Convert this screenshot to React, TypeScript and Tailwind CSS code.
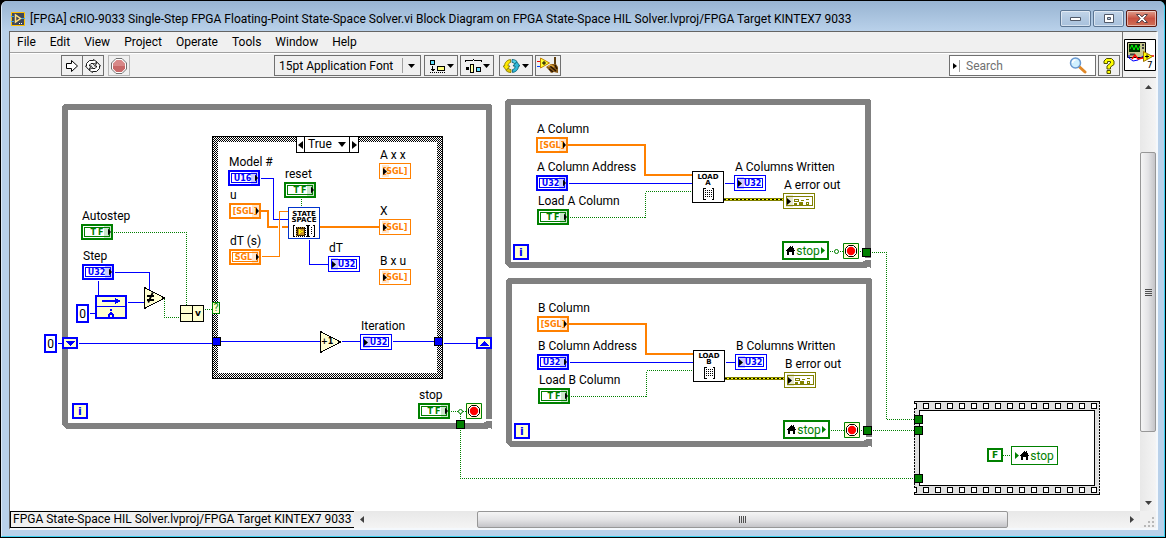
import type { ReactNode } from "react";

type Kind = "U16" | "U32" | "TF" | "SGL" | "[SGL]" | "error";

interface Terminal {
  x: number;
  y: number;
  kind: Kind;
  label: string;
  indicator?: boolean;
}

interface Wire {
  d: string;
  type: "int" | "bool" | "float" | "array";
}

// Diagram coordinates are window coordinates, the canvas starts at this corner.
const ORIGIN = { x: 10, y: 78 };

const MENUS = ["File", "Edit", "View", "Project", "Operate", "Tools", "Window", "Help"];

const TERMINALS: Terminal[] = [
  { x: 81, y: 224, kind: "TF", label: "Autostep" },
  { x: 82, y: 264, kind: "U32", label: "Step" },
  { x: 228, y: 170, kind: "U16", label: "Model #" },
  { x: 229, y: 203, kind: "[SGL]", label: "u" },
  { x: 229, y: 249, kind: "SGL", label: "dT (s)" },
  { x: 284, y: 182, kind: "TF", label: "reset" },
  { x: 379, y: 163, kind: "[SGL]", label: "A x x", indicator: true },
  { x: 379, y: 219, kind: "[SGL]", label: "X", indicator: true },
  { x: 379, y: 269, kind: "[SGL]", label: "B x u", indicator: true },
  { x: 328, y: 256, kind: "U32", label: "dT", indicator: true },
  { x: 360, y: 334, kind: "U32", label: "Iteration", indicator: true },
  { x: 418, y: 403, kind: "TF", label: "stop" },
  { x: 536, y: 137, kind: "[SGL]", label: "A Column" },
  { x: 536, y: 175, kind: "U32", label: "A Column Address" },
  { x: 537, y: 209, kind: "TF", label: "Load A Column" },
  { x: 734, y: 175, kind: "U32", label: "A Columns Written", indicator: true },
  { x: 783, y: 193, kind: "error", label: "A error out", indicator: true },
  { x: 537, y: 316, kind: "[SGL]", label: "B Column" },
  { x: 537, y: 354, kind: "U32", label: "B Column Address" },
  { x: 538, y: 388, kind: "TF", label: "Load B Column" },
  { x: 735, y: 354, kind: "U32", label: "B Columns Written", indicator: true },
  { x: 784, y: 372, kind: "error", label: "B error out", indicator: true },
];

const WIRES: Wire[] = [
  { type: "int", d: "M57 343H62M78 343H212M220 341H320M341 341H360M392 341H434M443 343H476" },
  { type: "int", d: "M114 272H149V290M98 280V295M89 313H95M127 302H144" },
  { type: "int", d: "M260 178H273V219H288M309 239V264H328" },
  { type: "int", d: "M568 183H692M724 183H734M569 362H693M725 362H735" },
  { type: "float", d: "M261 256H279V211H288" },
  { type: "array", d: "M261 211H268V227H278M282 227H288M320 227H379" },
  { type: "array", d: "M568 145H645V175H692M569 324H646V354H693" },
  { type: "bool", d: "M113 232H186V305M164 298V317H180M204 309H212M301 198V207" },
  { type: "bool", d: "M450 411H466M460 411V420M460 429V478H914" },
  { type: "bool", d: "M569 217H645V191H692M570 396H646V370H693" },
  { type: "bool", d: "M829 251H843M859 251H862M871 252H886V419H914" },
  { type: "bool", d: "M830 430H844M860 430H863M872 430H914" },
];

const WIRE_COLORS = { int: "#0000ff", bool: "#008000", float: "#ff8000", array: "#ff8000" };

const COLORS: Record<Kind, string> = {
  U16: "border-[#0000ff] text-[#0000ff]",
  U32: "border-[#0000ff] text-[#0000ff]",
  TF: "border-[#008000] text-[#008000]",
  SGL: "border-[#ff8000] text-[#ff8000]",
  "[SGL]": "border-[#ff8000] text-[#ff8000]",
  error: "border-[#808000] text-[#808000]",
};

const HOLES = Array.from({ length: 15 }, (_, i) => 923 + i * 12);

function Place({ x, y, children }: { x: number; y: number; children: ReactNode }) {
  return (
    <div className="absolute" style={{ left: x - ORIGIN.x, top: y - ORIGIN.y }}>
      {children}
    </div>
  );
}

function TerminalText({ kind }: { kind: Kind }) {
  if (kind === "error") {
    return (
      <svg width="20" height="8" viewBox="0 0 20 8" shapeRendering="crispEdges">
        <path d="M2.500 1.500h4v2h-4zM14.500 4.500h2v2h-2z" fill="none" stroke="#808000" />
        <path d="M9 2h3v1H9zM14 1h3v1h-3zM2 5h3v2H2zM7 4h4v3H7z" fill="#808000" />
      </svg>
    );
  }
  if (kind === "TF") {
    return (
      <span className="flex gap-[2px]">
        <span>T</span>
        <span>F</span>
      </span>
    );
  }
  return <span>{kind}</span>;
}

function TerminalNode({ x, y, kind, label, indicator }: Terminal) {
  const boxed = kind !== "[SGL]";
  const shift = indicator ? "pl-[5px]" : kind === "TF" ? "pr-0" : "pr-[3px]";
  return (
    <>
      <Place x={x + 1} y={y - 16}>
        <span className="block whitespace-nowrap text-[12px] leading-4">{label}</span>
      </Place>
      <Place x={x} y={y}>
        <div
          className={`relative flex h-4 w-8 bg-white ${COLORS[kind]} ${indicator ? "border p-[2px]" : "border-2 p-px"}`}
        >
          <div
            className={`flex flex-1 items-center justify-center pt-px font-['DejaVu_Sans',sans-serif] text-[8px] leading-none font-bold ${COLORS[kind]} ${boxed ? `border ${shift}` : ""}`}
          >
            <TerminalText kind={kind} />
          </div>
          <svg
            className={`absolute top-0 ${indicator ? "left-[2px] mt-px" : "right-0"}`}
            width="7"
            height="12"
            viewBox="0 0 7 12"
          >
            <path d="M0 0h7v12H0z" fill="currentColor" opacity="0.2" />
            <path d={indicator ? "M1 3v7l4-3.500z" : "M4 2.500v7L7 6z"} fill="#000" />
          </svg>
        </div>
      </Place>
    </>
  );
}

function LoopFrame({ x, y, right, bottom }: { x: number; y: number; right: number; bottom: number }) {
  return (
    <g fill="#808080">
      <path
        d={`M${x + 2} ${y}H${right - 2}l2 2V${bottom - 10}H${right - 6}V${y + 6}H${x + 6}V${bottom - 6}H${right - 8}v-1h2v-1H${right}v8h-1v-1h-3v1H${x + 4}l-4-4V${y + 3}z`}
      />
    </g>
  );
}

function Iteration({ x, y }: { x: number; y: number }) {
  return (
    <Place x={x} y={y}>
      <div className="flex h-4 w-4 items-center justify-center border-2 border-[#0000ff] bg-[#ffffd0] font-['DejaVu_Sans',sans-serif] text-[11px] leading-none font-bold text-[#0000ff]">
        i
      </div>
    </Place>
  );
}

function StopSign({ x, y }: { x: number; y: number }) {
  return (
    <Place x={x} y={y}>
      <svg className="block" width="16" height="16" viewBox="0 0 16 16">
        <path d="M.5.5h15v15H.5z" fill="#ffffd0" stroke="#008000" />
        <path d="M5.500 2.500h5l3 3v5l-3 3h-5l-3-3v-5z" fill="#fff" stroke="#000" />
        <circle cx="8" cy="8" r="4.200" fill="#f00" />
      </svg>
    </Place>
  );
}

function House() {
  return (
    <svg width="9" height="9" viewBox="0 0 9 9" shapeRendering="crispEdges">
      <path d="M4 0h1v1h1V0h1v2h1v2h1v1H8v4H6V6H3v3H1V5H0V4h1V3h1V2h1V1h1z" fill="#000" />
    </svg>
  );
}

function LocalVariable({ x, y, write }: { x: number; y: number; write?: boolean }) {
  const arrow = (
    <svg width="4" height="7" viewBox="0 0 4 7">
      <path d="M0 0v7l4-3.500z" fill="#008000" />
    </svg>
  );
  return (
    <Place x={x} y={y}>
      <div
        className={`flex h-[19px] w-[47px] items-center justify-center gap-px border-[#008000] bg-white text-[12px] leading-4 text-[#008000] ${write ? "border" : "border-2"}`}
      >
        {write && arrow}
        <House />
        <span>stop</span>
        {!write && arrow}
      </div>
    </Place>
  );
}

function Zero({ x, y }: { x: number; y: number }) {
  return (
    <Place x={x} y={y}>
      <div className="flex h-[19px] w-[13px] items-center justify-center border-2 border-[#0000ff] bg-white text-[12px] leading-4">
        0
      </div>
    </Place>
  );
}

function LoadNode({ x, y, name }: { x: number; y: number; name: string }) {
  return (
    <Place x={x} y={y}>
      <div className="flex h-8 w-8 flex-col items-center border border-black bg-white pt-[2px] font-['DejaVu_Sans',sans-serif] text-[7px] leading-[6px] font-bold">
        <span>LOAD</span>
        <span>{name}</span>
        <svg className="mt-[2px]" width="11" height="12" viewBox="0 0 11 12" shapeRendering="crispEdges">
          <path d="M2.500 .5h-2v11h2M8.500 .5h2v11h-2" fill="none" stroke="#000" />
          <path d="M2 2.500h7M2 4.500h7M2 6.500h7M2 8.500h7" stroke="#000" strokeDasharray="1 1" />
        </svg>
      </div>
    </Place>
  );
}

function StateSpaceNode() {
  return (
    <Place x={288} y={207}>
      <div className="flex h-8 w-8 flex-col items-center border border-[#0033cc] bg-white pt-[3px] font-['DejaVu_Sans',sans-serif] text-[7px] leading-[6px] font-bold">
        <span>STATE</span>
        <span>SPACE</span>
        <svg className="mt-[2px]" width="22" height="12" viewBox="0 0 22 12" shapeRendering="crispEdges">
          <path d="M2 .5H.5v11H2M13 .5h1.500v11H13M17 .5h-1.500v11H17M20 .5h1.500v11H20" fill="none" stroke="#000" />
          <path d="M3 2h9v9H3z" fill="#c89020" stroke="#000" strokeDasharray="1 1" />
          <path d="M4 3h7v7H4z" fill="#c89020" stroke="#402800" />
          <path d="M6 4.500v4l3-2z" fill="none" stroke="#ffff00" />
          <path d="M18.500 2v8" stroke="#000" strokeDasharray="1 1" />
        </svg>
      </div>
    </Place>
  );
}

function Structures() {
  return (
    <svg
      className="absolute top-0 left-0 overflow-visible"
      width="1130"
      height="433"
      viewBox="10 78 1130 433"
      shapeRendering="crispEdges"
      aria-hidden="true"
    >
      <defs>
        <pattern id="hatch" width="2" height="2" patternUnits="userSpaceOnUse">
          <path d="M0 0h2v2H0z" fill="#fff" />
          <path d="M0 0h1v1H0zM1 1h1v1H1z" />
        </pattern>
      </defs>
      <LoopFrame x={62} y={104} right={492} bottom={429} />
      <LoopFrame x={505} y={99} right={871} bottom={268} />
      <LoopFrame x={506} y={278} right={872} bottom={447} />

      {/* case structure */}
      <path d="M212 136h231v243H212zM218 142v231h219V142z" fill="url(#hatch)" fillRule="evenodd" />
      <path d="M212.500 136.500h230v242h-230z" fill="none" stroke="#000" />

      {/* flat sequence */}
      <path d="M914 401h186v94H914z" fill="#e0e0e0" />
      <path d="M914 401.500h186M914 494.500h186" stroke="#000" />
      <path d="M914.500 402v92M1099.500 402v92" stroke="#000" strokeDasharray="2 1" />
      <path d="M919.500 410.500h175v75h-175z" fill="#fff" stroke="#000" />
      <g fill="#fff" stroke="#000">
        <path d="M914 403.500h2.500v5H914M914 487.500h2.500v5H914" />
        {HOLES.map((x) => (
          <path key={x} d={`M${x + 0.5} 403.500h5v5h-5zM${x + 0.5} 487.500h5v5h-5z`} />
        ))}
      </g>

      {WIRES.map(({ d, type }) => (
        <path
          key={d}
          d={d}
          fill="none"
          stroke={WIRE_COLORS[type]}
          strokeWidth={type === "array" ? 2 : 1}
          strokeDasharray={type === "bool" ? "1 1" : undefined}
          transform={type === "array" ? undefined : "translate(.5 .5)"}
        />
      ))}
      {[
        [724, 783, 199],
        [725, 784, 378],
      ].map(([from, to, y]) => (
        <g key={y}>
          <path d={`M${from} ${y + 0.5}H${to}`} stroke="#808000" strokeWidth="3" />
          <path d={`M${from} ${y + 0.5}H${to}`} stroke="#ffff00" />
          <path d={`M${from} ${y + 0.5}H${to}`} stroke="#000" strokeDasharray="2 2" />
        </g>
      ))}
      <path d="M987 455.500h24" stroke="#008000" strokeDasharray="1 1" />
      <g fill="#fff" stroke="#008000" shapeRendering="auto">
        <circle cx="460.500" cy="411.500" r="2" />
        <circle cx="836.500" cy="251.500" r="2" />
      </g>

      {/* tunnels */}
      <g stroke="#000">
        <path
          fill="#008000"
          d="M456.500 420.500h8v8h-8zM862.500 248.500h8v8h-8zM863.500 426.500h8v8h-8zM914.500 415.500h8v8h-8zM914.500 426.500h8v8h-8zM914.500 474.500h8v8h-8z"
        />
        <path fill="#0000ff" d="M212.500 337.500h8v8h-8zM434.500 337.500h8v8h-8z" />
      </g>

      {/* shift registers */}
      <path d="M63 338h14v10H63zM477 338h14v10h-14z" fill="#ffffd0" stroke="#0000ff" strokeWidth="2" />
      <path d="M65 341h10l-5 5zM479 346h10l-5-5z" fill="#0000ff" />

      {/* feedback node */}
      <path d="M96 296h30v22H96z" fill="#ffffd0" stroke="#0000ff" strokeWidth="2" />
      <path d="M96 306.500h30" stroke="#0000ff" />
      <path d="M102 300h13v-2l6 3-6 3v-2h-13z" fill="#0000ff" />
      <path d="M110 309h2v2h-2zM110 312h2v1h1v1h1v3h-2v-2h-2v2h-2v-3h1v-1h1z" fill="#0000ff" />

      {/* not equal, increment, or */}
      <g fill="#ffffd0" stroke="#000">
        <path d="M144.500 287.500v21l20-10.500zM320.500 331.500v21l20-10.500z" />
        <path d="M180.500 305.500h23v16h-23zM192.500 305.500v16M180.500 313.500h12" />
      </g>
      <path d="M147 295h7v2h-7zM147 299h7v2h-7zM152 292l1.500 1-4.500 10-1.500-1z" shapeRendering="auto" />
    </svg>
  );
}

function Diagram() {
  return (
    <main className="relative min-w-0 flex-1 overflow-hidden bg-white">
      <Structures />
      {TERMINALS.map((t) => (
        <TerminalNode key={`${t.x}-${t.y}`} {...t} />
      ))}
      <Place x={296} y={136}>
        <div className="flex h-[17px] w-[63px] items-stretch border border-black bg-white text-[12px] leading-[15px]">
          <button type="button" aria-label="Previous case" className="flex w-2 items-center justify-center border-r border-black">
            <svg width="5" height="8" viewBox="0 0 5 8"><path d="M5 0v8L0 4z" /></svg>
          </button>
          <button type="button" className="flex flex-1 items-center justify-between px-[3px]">
            True
            <svg width="8" height="5" viewBox="0 0 8 5"><path d="M0 0h8L4 5z" /></svg>
          </button>
          <button type="button" aria-label="Next case" className="flex w-[9px] items-center justify-center border-l border-black">
            <svg width="5" height="8" viewBox="0 0 5 8"><path d="M0 0v8l5-4z" /></svg>
          </button>
        </div>
      </Place>
      <StateSpaceNode />
      <LoadNode x={692} y={171} name="A" />
      <LoadNode x={693} y={350} name="B" />
      <Iteration x={72} y={403} />
      <Iteration x={513} y={244} />
      <Iteration x={514} y={423} />
      <StopSign x={466} y={403} />
      <StopSign x={843} y={243} />
      <StopSign x={844} y={422} />
      <LocalVariable x={782} y={241} />
      <LocalVariable x={783} y={420} />
      <LocalVariable x={1011} y={446} write />
      <Zero x={44} y={334} />
      <Zero x={76} y={304} />
      <Place x={987} y={448}>
        <div className="flex h-[14px] w-4 items-center justify-center border-2 border-[#008000] bg-white font-['DejaVu_Sans',sans-serif] text-[9px] leading-none font-bold text-[#008000]">
          F
        </div>
      </Place>
      <Place x={212} y={302}>
        <div className="flex h-3 w-2 items-center justify-center border border-[#008000] bg-[#ffffd0] text-[10px] leading-none text-[#008000]">
          ?
        </div>
      </Place>
      <Place x={193} y={306}>
        <span className="block w-[10px] text-center font-['DejaVu_Sans',sans-serif] text-[9px] leading-[15px] font-bold">v</span>
      </Place>
      <Place x={321} y={335}>
        <span className="block font-['DejaVu_Sans',sans-serif] text-[8px] leading-[13px] font-bold">+1</span>
      </Place>
    </main>
  );
}

function ToolButton({ label, className, children }: { label: string; className: string; children: ReactNode }) {
  return (
    <button
      type="button"
      aria-label={label}
      className={`flex h-[21px] items-center justify-center border bg-[#f0f0f0] ${className}`}
    >
      {children}
    </button>
  );
}

function Caret() {
  return (
    <svg width="7" height="4" viewBox="0 0 7 4">
      <path d="M0 0h7L3.500 4z" />
    </svg>
  );
}

function Toolbar() {
  return (
    <div className="flex h-6 items-center border-t border-white pr-[2px] pl-[51px]">
      <ToolButton label="Run" className="w-[22px] border-[#707070]">
        <svg width="12" height="12" viewBox="0 0 12 12">
          <path d="M.5 3.500h5v-3L11.500 6l-6 5.500v-3h-5z" fill="#fff" stroke="#000" />
        </svg>
      </ToolButton>
      <ToolButton label="Run Continuously" className="-ml-px w-[22px] border-[#707070]">
        <svg width="16" height="14" viewBox="0 0 16 14">
          <g fill="#fff" stroke="#000" strokeWidth=".9">
            <path d="M1.500 7V4.500l3-3h4v-1L12 3 8.500 5.500v-1H6L4.500 6v1h2L3.500 10.500.5 7z" />
            <path d="M14.500 7v2.500l-3 3h-4v1L4 11l3.500-2.500v1H10L11.500 8V7h-2l3-3.500 3 3.500z" />
          </g>
        </svg>
      </ToolButton>
      <ToolButton label="Abort Execution" className="ml-1 w-[22px] border-[#b8b8b8]">
        <svg width="16" height="16" viewBox="0 0 16 16">
          <path d="M5 .5h6L15.500 5v6L11 15.500H5L.5 11V5z" fill="#fff" stroke="#707070" />
          <path d="M5.500 2h5L14 5.500v5L10.500 14h-5L2 10.500v-5z" fill="#d88888" />
          <path d="M2 8h12v2.500L10.500 14h-5L2 10.500z" fill="#c86868" />
        </svg>
      </ToolButton>
      <div className="relative ml-36 h-[21px] w-[147px] border border-[#707070] bg-[#f0f0f0]">
        <select aria-label="Text settings" className="block h-full w-full appearance-none pl-1 text-[12px] leading-[18px] outline-none">
          <option>15pt Application Font</option>
        </select>
        <span className="pointer-events-none absolute inset-y-[2px] right-0 flex w-[18px] items-center justify-center border-l border-[#a0a0a0]">
          <Caret />
        </span>
      </div>
      <ToolButton label="Align Objects" className="ml-[3px] w-[34px] gap-[2px] border-[#707070]">
        <svg width="16" height="14" viewBox="0 0 16 14" shapeRendering="crispEdges">
          <path d="M1.500 1.500h4v4h-4z" fill="#60e0ff" stroke="#000" />
          <path d="M8.500 7.500h7v4h-7z" fill="#ffff80" stroke="#000" />
          <path d="M3 7h1v3h2l-2 2H3l-2-2h2z" />
          <path d="M1 13.500h15" stroke="#000" strokeDasharray="1 1" />
        </svg>
        <Caret />
      </ToolButton>
      <ToolButton label="Distribute Objects" className="ml-[2px] w-[34px] gap-px border-[#707070]">
        <svg width="17" height="14" viewBox="0 0 17 14" shapeRendering="crispEdges">
          <path d="M.5 3V1.500H7L8.500 .5 10 1.500h6V3" fill="none" stroke="#000" />
          <path d="M1 8h3v3H1z" />
          <path d="M5.500 5.500h3v8h-3z" fill="#ffffa0" stroke="#000" />
          <path d="M11.500 8.500h4v4h-4z" fill="#60e0ff" stroke="#000" />
        </svg>
        <Caret />
      </ToolButton>
      <ToolButton label="Reorder" className="ml-[5px] w-[34px] gap-[2px] border-[#707070]">
        <svg width="17" height="14" viewBox="0 0 17 14">
          <path d="M7.500 .5v3C6 4 5 5 5 7h2L3.500 11.500 0 7h1.500C1.500 3.500 4 1 7.500.5z" fill="#ffe800" stroke="#787000" strokeWidth=".8" />
          <path d="M3 11.500c1.500 1.500 3 2 5 2v-3c-1.500 0-2-.5-2.500-1.500z" fill="#e0c800" stroke="#787000" strokeWidth=".8" />
          <path d="M9.500 13.500v-3c2-.5 2.500-1.500 2.500-3.500h-2l3.500-4.500L17 7h-1.500c0 3.500-2.500 6-6 6.500z" fill="#30b8d8" stroke="#005870" strokeWidth=".8" />
          <path d="M14 2.500C12.500 1 11 .5 9 .5v3c1.500 0 2 .5 2.500 1.500z" fill="#50d0e8" stroke="#005870" strokeWidth=".8" />
        </svg>
        <Caret />
      </ToolButton>
      <ToolButton label="Clean Up Diagram" className="ml-[2px] w-[26px] border-[#707070]">
        <svg width="22" height="17" viewBox="0 0 22 17">
          <path d="M0 4.500h5" stroke="#f00000" />
          <path d="M0 9.500h5" stroke="#0040ff" />
          <path d="M3.500 1v10l9-5z" fill="#ffff30" stroke="#c08000" />
          <path d="M5 6h4M7 4v4" stroke="#000" />
          <path d="M17 0h2v8h-2z" fill="#604010" />
          <path d="M9 10l5-3h5l2 3v6l-4-1-3 1-2-3z" fill="#8c5c18" />
          <path d="M13 9l6 5M12 12l4 3M18 8l2 4" stroke="#281400" strokeWidth="1.500" />
          <path d="M11 9.500l3-1.500 3 2" fill="none" stroke="#d8a038" strokeWidth="1.500" />
        </svg>
      </ToolButton>
      <form className="ml-auto flex h-[21px] w-[147px] items-center border border-[#707070] bg-white" role="search">
        <button type="button" aria-label="Search options" className="flex h-3 w-[10px] items-center justify-center border-r border-[#a0a0a0]">
          <svg width="4" height="6" viewBox="0 0 4 6"><path d="M0 0v6l4-3z" /></svg>
        </button>
        <input
          type="text"
          aria-label="Search"
          placeholder="Search"
          className="min-w-0 flex-1 pl-[6px] text-[12px] leading-4 outline-none placeholder:text-[#707070]"
        />
        <button type="button" aria-label="Start search" className="mr-2">
          <svg width="18" height="17" viewBox="0 0 18 17">
            <path d="M10 9.500l6 5.500" stroke="#e08828" strokeWidth="3" strokeLinecap="round" />
            <circle cx="6.500" cy="6" r="5" fill="#d0f0ff" stroke="#6898d0" strokeWidth="1.500" />
            <path d="M3.500 6a3 3 0 0 1 3-3" fill="none" stroke="#fff" strokeWidth="1.500" />
          </svg>
        </button>
      </form>
      <ToolButton label="Context Help" className="ml-[2px] w-[22px] border-[#707070]">
        <svg width="12" height="16" viewBox="0 0 12 16">
          <path
            d="M1 5.500V3l2.500-2.500h5L11 3v3.500L7.500 9v2H4V8l3.500-3V3.500h-3v2zM4 12.500h3.500v3H4z"
            fill="#ffff00"
            stroke="#505000"
          />
        </svg>
      </ToolButton>
    </div>
  );
}

function ViIcon() {
  return (
    <svg className="block" width="32" height="32" viewBox="0 0 32 32" aria-label="VI icon">
      <path d="M.5.5h31v31H.5z" fill="#fff" stroke="#000" />
      <path d="M3.500 3.500h18v15h-18z" fill="#c8c890" stroke="#000" />
      <path d="M5 5h11v8H5z" fill="#003000" />
      <path d="M6 10l2-4 2 5 2-5 2 5 2-4" fill="none" stroke="#00ff00" />
      <path d="M18 6h2M18 9h2M6 15.500h5" stroke="#404040" strokeWidth="2" />
      <path d="M5 16v3l4 3 5-1 5-4" fill="none" stroke="#0000ff" />
      <path d="M8 20l3-4 3 4 5-1M27 17h3" fill="none" stroke="#ff0000" strokeWidth="1.500" />
      <path d="M19.500 12.500v10l9-5z" fill="#ffff00" stroke="#a07000" />
      <path d="M21 17.500h4M23 15.500v4" stroke="#000" />
      <text x="23" y="29" className="font-['DejaVu_Sans',sans-serif] text-[9px]">7</text>
    </svg>
  );
}

function TitleBar() {
  const button = "flex h-[17px] w-[31px] items-center justify-center rounded-[2px] border shadow-[inset_0_0_0_1px_rgba(255,255,255,0.5)]";
  const blue = "border-[#5c7694] bg-linear-to-b from-[#c3d5e9] via-[#b4cae2] via-45% to-[#a8c1dc]";
  return (
    <header className="flex h-[30px] items-center bg-linear-to-b from-[#98b4d2] to-[#b9d1ea] pr-[7px] pl-[9px]">
      <svg className="mt-[5px]" width="14" height="14" viewBox="0 0 14 14" aria-hidden="true">
        <path d="M.5.5h13v13H.5z" fill="#404858" stroke="#ffc000" />
        <path d="M0 4.500h3M0 9.500h3M10 6.500h4" stroke="#40a0e0" />
        <path d="M4.500 3v7l5-3.500z" fill="#404858" stroke="#ffe080" strokeWidth="1.500" />
        <path d="M8 11.500h4" stroke="#fff" strokeDasharray="1 1" />
      </svg>
      <h1 className="ml-[5px] min-w-0 flex-1 truncate pt-[6px] text-[12px] leading-4">
        [FPGA] cRIO-9033 Single-Step FPGA Floating-Point State-Space Solver.vi Block Diagram on FPGA State-Space HIL
        Solver.lvproj/FPGA Target KINTEX7 9033
      </h1>
      <div className="flex gap-[2px] pt-[5px]">
        <button type="button" aria-label="Minimize" className={`${button} ${blue}`}>
          <svg width="11" height="4" viewBox="0 0 11 4"><path d="M.5.5h10v3H.5z" fill="#fff" stroke="#505868" /></svg>
        </button>
        <button type="button" aria-label="Maximize" className={`${button} ${blue}`}>
          <svg width="10" height="9" viewBox="0 0 10 9"><path d="M.5.5h9v8h-9zM3.500 3.500h3v2h-3z" fill="#fff" fillRule="evenodd" stroke="#505868" /></svg>
        </button>
        <button type="button" aria-label="Close" className={`${button} border-[#5c1810] bg-linear-to-b from-[#e0a090] via-[#c85040] via-50% to-[#d07058]`}>
          <svg width="12" height="9" viewBox="0 0 12 9">
            <path d="M.5.5h3L6 2.800 8.500.5h3L7.800 4.500l3.700 4h-3L6 6.200 3.500 8.500h-3l3.700-4z" fill="#fff" stroke="#504048" />
          </svg>
        </button>
      </div>
    </header>
  );
}

function VerticalScroll() {
  return (
    <div className="flex w-4 flex-col items-stretch bg-linear-to-r from-[#e8e8e8] to-[#f4f4f4]">
      <button type="button" aria-label="Scroll up" className="flex h-[17px] items-center justify-center">
        <svg width="7" height="4" viewBox="0 0 7 4"><path d="M0 4h7L3.500 0z" fill="#404040" /></svg>
      </button>
      <div className="flex-[57]" />
      <div className="flex flex-[281] flex-col items-center justify-center gap-px rounded-[2px] border border-[#979797] bg-linear-to-r from-[#f5f5f5] via-[#e4e4e6] to-[#c4c4c8]">
        <span className="h-px w-[7px] bg-[#505050]" />
        <span className="h-px w-[7px] bg-[#505050]" />
        <span className="h-px w-[7px] bg-[#505050]" />
        <span className="h-px w-[7px] bg-[#505050]" />
      </div>
      <div className="flex-[62]" />
      <button type="button" aria-label="Scroll down" className="flex h-[17px] items-center justify-center">
        <svg width="7" height="4" viewBox="0 0 7 4"><path d="M0 0h7L3.500 4z" fill="#404040" /></svg>
      </button>
    </div>
  );
}

function BottomBar() {
  return (
    <footer className="flex h-[17px] items-stretch bg-[#f0f0f0]">
      <span className="min-w-[334px] shrink-0 border border-r-0 border-black px-[2px] text-[12px] leading-[15px] whitespace-nowrap">
        FPGA State-Space HIL Solver.lvproj/FPGA Target KINTEX7 9033
      </span>
      <div className="flex min-w-0 flex-1 bg-linear-to-b from-[#e8e8e8] to-[#f4f4f4]">
        <button type="button" aria-label="Scroll left" className="flex w-4 items-center justify-center">
          <svg width="4" height="7" viewBox="0 0 4 7"><path d="M4 0v7L0 3.500z" fill="#404040" /></svg>
        </button>
        <div className="flex-[108]" />
        <div className="flex flex-[529] items-center justify-center gap-px rounded-[2px] border border-[#979797] bg-linear-to-b from-[#f5f5f5] via-[#e4e4e6] to-[#c4c4c8]">
          <span className="h-[7px] w-px bg-[#505050]" />
          <span className="h-[7px] w-px bg-[#505050]" />
          <span className="h-[7px] w-px bg-[#505050]" />
          <span className="h-[7px] w-px bg-[#505050]" />
        </div>
        <div className="flex-[116]" />
        <button type="button" aria-label="Scroll right" className="flex w-4 items-center justify-center">
          <svg width="4" height="7" viewBox="0 0 4 7"><path d="M0 0v7l4-3.500z" fill="#404040" /></svg>
        </button>
      </div>
      <svg className="self-end" width="16" height="12" viewBox="0 0 16 12" shapeRendering="crispEdges">
        <path d="M12 1h2v2h-2zM8 5h2v2H8zM12 5h2v2h-2zM4 9h2v2H4zM8 9h2v2H8zM12 9h2v2h-2z" fill="#b8b8b8" />
      </svg>
    </footer>
  );
}

export default function App() {
  return (
    <div className="flex min-h-screen flex-col bg-black font-[Roboto,'Open_Sans',sans-serif] text-black">
      <div className="m-px flex flex-1 flex-col overflow-hidden rounded-t-md border-r border-b border-l border-[#3ccfef] border-l-[#dce9f6] bg-[#b9d1ea]">
        <TitleBar />
        <div className="mr-[6px] mb-[6px] ml-[7px] flex flex-1 flex-col border-t border-r-2 border-b-2 border-l border-[#646464] border-r-[#f4f8fc] border-b-[#f4f8fc] bg-[#f0f0f0]">
          <div className="flex border-b border-[#707070]">
            <div className="flex min-w-0 flex-1 flex-col">
              <nav className="flex h-[21px] items-center gap-[14px] border-b border-[#a0a0a0] pb-px pl-[7px]">
                {MENUS.map((m) => (
                  <button key={m} type="button" className="text-[12px] leading-4">
                    {m}
                  </button>
                ))}
              </nav>
              <Toolbar />
            </div>
            <div className="flex items-center border-l border-[#707070] pl-px">
              <ViIcon />
            </div>
          </div>
          <div className="flex flex-1">
            <Diagram />
            <VerticalScroll />
          </div>
          <BottomBar />
        </div>
      </div>
    </div>
  );
}
